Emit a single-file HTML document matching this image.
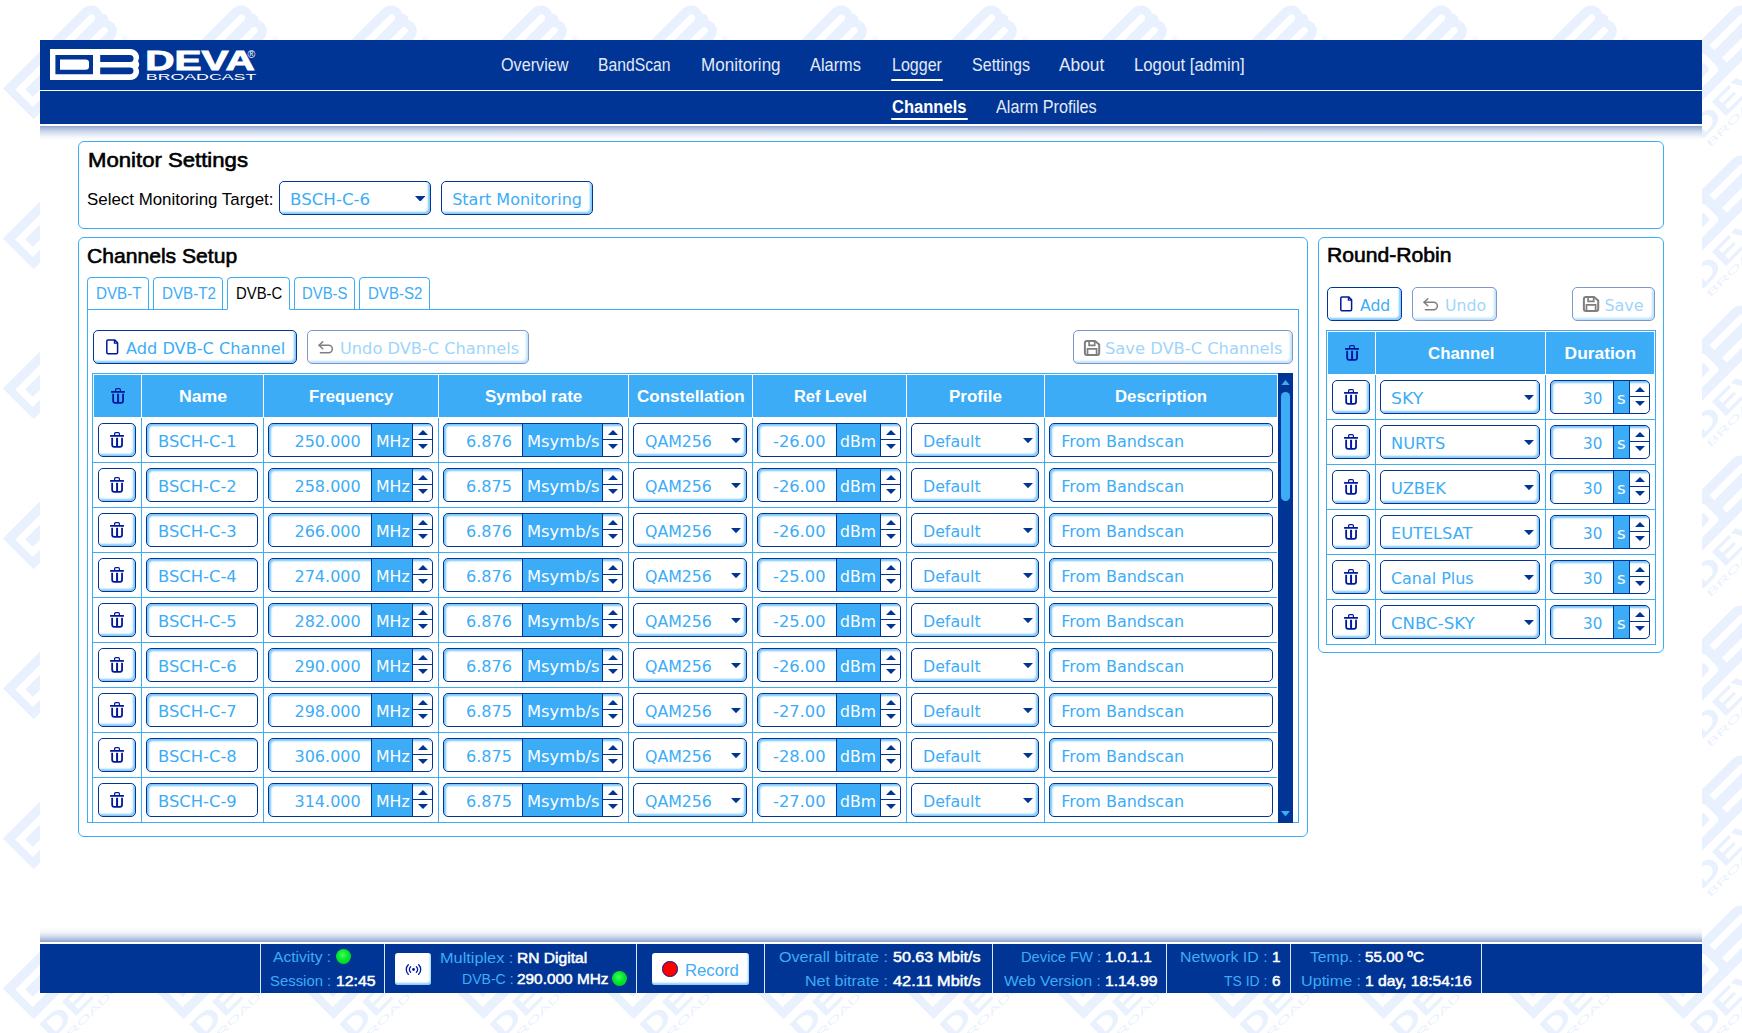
<!DOCTYPE html>
<html lang="en"><head><meta charset="utf-8"><title>DEVA Broadcast - Logger Channels</title>
<style>
html,body{margin:0;padding:0}
body{width:1742px;height:1033px;position:relative;overflow:hidden;background:#fff;font-family:"Liberation Sans",sans-serif}
div,span.t,svg{position:absolute;box-sizing:border-box}
span.t{white-space:pre;line-height:1;transform-origin:0 0;display:block}
.panel{border:1px solid #3dacf7;border-radius:6px;background:#fff}
.inp{border:1px solid #003595;border-radius:5px;background:#fff;box-shadow:inset 2px 2px 2px rgba(61,172,247,.7)}
.btn{border:1px solid #003595;border-radius:5px;background:#fff;box-shadow:inset -2px -2px 2px rgba(61,172,247,.65)}
.dis{opacity:.5}
.th{background:#3dacf7}
.ln{background:#3dacf7}
.unit{background:#3dacf7;border-left:1px solid #003595;border-right:1px solid #003595}
.sep{background:#d9e6fb}

</style></head>
<body>
<svg width="1742" height="1033" style="left:0;top:0">
<defs><g id="wml"><path fill="#e9f1fe" d="M0 0 H112 A12.5 11.5 0 0 1 123 17 Q125 19 125 21.7 Q125 24 123 26.4 A12.5 11.5 0 0 1 112 43.4 H0 Z"/><path fill="#fff" d="M8 9.3 H56 Q61 9.3 61 14 V29.4 Q61 34.1 56 34.1 H8 Z"/><path fill="#e9f1fe" d="M15.2 16.3 H50 Q54 16.3 54 20 V23.4 Q54 27.1 50 27.1 H15.2 Z"/><path fill="#fff" d="M70.5 9.3 H112.5 A3.5 3.5 0 0 1 112.5 16.3 H70.5 Z"/><path fill="#fff" d="M70.5 27.1 H112.5 A3.5 3.5 0 0 1 112.5 34.1 H70.5 Z"/><text x="-2.5" y="71" font-family="Liberation Sans,sans-serif" font-weight="700" font-size="29" textLength="119" lengthAdjust="spacingAndGlyphs" fill="#e9f1fe">DEVA</text><text x="-1" y="82.5" font-family="Liberation Sans,sans-serif" font-size="9.5" textLength="126" lengthAdjust="spacingAndGlyphs" fill="#e9f1fe">BROADCAST</text><text x="117.5" y="55" font-family="Liberation Sans,sans-serif" font-size="9.5" fill="#e9f1fe">®</text></g>
<clipPath id="wmc"><rect x="0" y="0" width="150" height="150"/></clipPath>
<pattern id="wmp" width="150" height="150" patternUnits="userSpaceOnUse"><g clip-path="url(#wmc)"><g transform="matrix(0.7071 -0.7071 0.7071 0.7071 2.97 88.50)"><use href="#wml"/></g></g></pattern></defs>
<rect width="1742" height="1033" fill="url(#wmp)"/></svg>
<div style="left:40px;top:40px;width:1662px;height:953px;background:#fff"></div>
<div style="left:40px;top:40px;width:1662px;height:84px;background:#003595"></div>
<div style="left:40px;top:90px;width:1662px;height:1px;background:#fff"></div>
<div style="left:40px;top:126px;width:1662px;height:14px;background:linear-gradient(to bottom,#8fa6d2 0%,#c9d4ea 35%,#f1f4fa 75%,#fff 100%)"></div>
<svg width="210" height="34" viewBox="0 0 210 34" style="left:49px;top:48px">
<path fill="#fff" d="M1 1 H81 A9 8.3 0 0 1 89 13.2 Q90.2 14.8 90.2 16.5 Q90.2 18.2 89 19.8 A9 8.3 0 0 1 81 32 H1 Z"/>
<path fill="#003595" d="M6.4 6.9 H44 V26.3 H6.4 Z"/>
<path fill="#fff" d="M11 11.4 H36.5 Q40 11.4 40 14.4 V18.8 Q40 21.8 36.5 21.8 H11 Z"/>
<path fill="#003595" d="M51.2 6.9 H81 A3.55 3.55 0 0 1 81 14 H51.2 Z"/>
<path fill="#003595" d="M51.2 19.4 H81 A3.45 3.45 0 0 1 81 26.3 H51.2 Z"/>
<text x="96.3" y="21.5" font-family="Liberation Sans,sans-serif" font-weight="700" font-size="27.6" textLength="109.5" lengthAdjust="spacingAndGlyphs" fill="#fff" stroke="#fff" stroke-width="0.9">DEVA</text>
<text x="96.8" y="31.9" font-family="Liberation Sans,sans-serif" font-size="8.6" textLength="110.5" lengthAdjust="spacingAndGlyphs" fill="#fff">BROADCAST</text>
<text x="198.6" y="9.6" font-family="Liberation Sans,sans-serif" font-size="10.5" fill="#fff">®</text>
</svg>
<span id="t0" class="t" style="left:500.70px;top:57.00px;font:400 17.5px/1 'Liberation Sans',sans-serif;color:#e3eaf6;transform:scaleX(0.9241);">Overview</span>
<span id="t1" class="t" style="left:598.20px;top:57.00px;font:400 17.5px/1 'Liberation Sans',sans-serif;color:#e3eaf6;transform:scaleX(0.8977);">BandScan</span>
<span id="t2" class="t" style="left:700.90px;top:57.00px;font:400 17.5px/1 'Liberation Sans',sans-serif;color:#e3eaf6;transform:scaleX(0.9741);">Monitoring</span>
<span id="t3" class="t" style="left:810.20px;top:57.00px;font:400 17.5px/1 'Liberation Sans',sans-serif;color:#e3eaf6;transform:scaleX(0.9347);">Alarms</span>
<span id="t4" class="t" style="left:891.50px;top:57.00px;font:400 17.5px/1 'Liberation Sans',sans-serif;color:#e3eaf6;transform:scaleX(0.9156);">Logger</span>
<span id="t5" class="t" style="left:971.80px;top:57.00px;font:400 17.5px/1 'Liberation Sans',sans-serif;color:#e3eaf6;transform:scaleX(0.9172);">Settings</span>
<span id="t6" class="t" style="left:1059.30px;top:57.00px;font:400 17.5px/1 'Liberation Sans',sans-serif;color:#e3eaf6;transform:scaleX(0.9883);">About</span>
<span id="t7" class="t" style="left:1134.40px;top:57.00px;font:400 17.5px/1 'Liberation Sans',sans-serif;color:#e3eaf6;transform:scaleX(0.9552);">Logout [admin]</span>
<div style="left:890.7px;top:79px;width:52px;height:2.3px;background:#fff;border-radius:1.2px"></div>
<span id="t8" class="t" style="left:891.50px;top:99.00px;font:700 17.5px/1 'Liberation Sans',sans-serif;color:#fff;transform:scaleX(0.9457);">Channels</span>
<div style="left:890.7px;top:118px;width:77px;height:2.4px;background:#fff;border-radius:1.2px"></div>
<span id="t9" class="t" style="left:996.20px;top:99.00px;font:400 17.5px/1 'Liberation Sans',sans-serif;color:#e3eaf6;transform:scaleX(0.9245);">Alarm Profiles</span>
<div class="panel" style="left:78px;top:141px;width:1586px;height:87.5px;"></div>
<span id="t10" class="t" style="left:87.50px;top:150.00px;font:400 20.6px/1 'Liberation Sans',sans-serif;color:#000;transform:scaleX(1.0752);-webkit-text-stroke:0.6px #000;">Monitor Settings</span>
<span id="t11" class="t" style="left:87.20px;top:191.00px;font:400 17.4px/1 'Liberation Sans',sans-serif;color:#000;transform:scaleX(0.9711);">Select Monitoring Target:</span>
<div class="btn" style="left:279px;top:181px;width:152px;height:34px;"></div>
<span id="t12" class="t" style="left:289.90px;top:192.00px;font:400 16px/1 'DejaVu Sans','Liberation Sans',sans-serif;color:#3dacf7;transform:scaleX(1.0422);">BSCH-C-6</span>
<svg width="10.5" height="5.6" viewBox="0 0 10.5 5.6" style="left:414.5px;top:195.7px"><path d="M0 0 H10.5 L5.25 5.6 Z" fill="#003595"/></svg>
<div class="btn" style="left:441px;top:181px;width:152px;height:34px;"></div>
<span id="t13" class="t" style="left:452.20px;top:192.00px;font:400 16px/1 'DejaVu Sans','Liberation Sans',sans-serif;color:#3dacf7;">Start Monitoring</span>
<div class="panel" style="left:78px;top:237px;width:1230px;height:599.5px;"></div>
<span id="t14" class="t" style="left:87.40px;top:246.00px;font:400 20.6px/1 'Liberation Sans',sans-serif;color:#000;transform:scaleX(1.0248);-webkit-text-stroke:0.6px #000;">Channels Setup</span>
<div style="left:87px;top:309px;width:1212px;height:514px;border:1px solid #3dacf7"></div>
<div style="left:87px;top:277px;width:62px;height:32px;border:1px solid #3dacf7;border-bottom:none;border-radius:4.5px 4.5px 0 0;background:#fff"></div>
<div style="left:153px;top:277px;width:70px;height:32px;border:1px solid #3dacf7;border-bottom:none;border-radius:4.5px 4.5px 0 0;background:#fff"></div>
<div style="left:227px;top:277px;width:63px;height:33px;border:1px solid #3dacf7;border-bottom:1px solid #fff;border-radius:4.5px 4.5px 0 0;background:#fff"></div>
<div style="left:294px;top:277px;width:61px;height:32px;border:1px solid #3dacf7;border-bottom:none;border-radius:4.5px 4.5px 0 0;background:#fff"></div>
<div style="left:359px;top:277px;width:71px;height:32px;border:1px solid #3dacf7;border-bottom:none;border-radius:4.5px 4.5px 0 0;background:#fff"></div>
<span id="t15" class="t" style="left:96.00px;top:285.00px;font:400 17.4px/1 'Liberation Sans',sans-serif;color:#3dacf7;transform:scaleX(0.8738);">DVB-T</span>
<span id="t16" class="t" style="left:161.50px;top:285.00px;font:400 17.4px/1 'Liberation Sans',sans-serif;color:#3dacf7;transform:scaleX(0.8732);">DVB-T2</span>
<span id="t17" class="t" style="left:235.80px;top:285.00px;font:400 17.4px/1 'Liberation Sans',sans-serif;color:#000;transform:scaleX(0.8557);">DVB-C</span>
<span id="t18" class="t" style="left:302.30px;top:285.00px;font:400 17.4px/1 'Liberation Sans',sans-serif;color:#3dacf7;transform:scaleX(0.8541);">DVB-S</span>
<span id="t19" class="t" style="left:367.80px;top:285.00px;font:400 17.4px/1 'Liberation Sans',sans-serif;color:#3dacf7;transform:scaleX(0.8643);">DVB-S2</span>
<div class="btn" style="left:93px;top:330px;width:204px;height:34px;"></div>
<svg width="13" height="16" viewBox="0 0 13 16" style="left:105.5px;top:339.2px"><path d="M2 0.9 H8.6 L11.6 3.9 V13.6 Q11.6 14.8 10.4 14.8 H2 Q0.8 14.8 0.8 13.6 V2.1 Q0.8 0.9 2 0.9 Z" stroke="#00189b" stroke-width="1.5" fill="none" stroke-linejoin="round"/><path d="M8.4 1.2 V4.1 H11.3" stroke="#00189b" stroke-width="1.2" fill="none"/></svg>
<span id="t20" class="t" style="left:126.10px;top:341.00px;font:400 16px/1 'DejaVu Sans','Liberation Sans',sans-serif;color:#3dacf7;transform:scaleX(1.0098);">Add DVB-C Channel</span>
<div class="btn dis" style="left:307px;top:330px;width:221.5px;height:34px;"></div>
<div class="dis" style="left:0;top:0;width:0;height:0">
<svg width="16" height="13" viewBox="0 0 16 13" style="left:318.3px;top:340.7px"><path d="M1.2 4.3 H10.6 A3.75 3.75 0 0 1 10.6 11.8 H2.4" stroke="#000" stroke-width="1.5" fill="none" stroke-linecap="round"/><path d="M4.8 0.8 L1 4.3 L4.8 7.8" stroke="#000" stroke-width="1.5" fill="none" stroke-linecap="round" stroke-linejoin="round"/></svg>
<span id="t21" class="t" style="left:339.50px;top:341.00px;font:400 16px/1 'DejaVu Sans','Liberation Sans',sans-serif;color:#3dacf7;transform:scaleX(1.0124);">Undo DVB-C Channels</span>
</div>
<div class="btn dis" style="left:1073px;top:330px;width:220px;height:34px;"></div>
<div class="dis" style="left:0;top:0;width:0;height:0">
<svg width="18" height="17" viewBox="0 0 18 17" style="left:1083.3px;top:338.8px"><path d="M3.9 1.9 H12 L16.2 5.6 V13.9 Q16.2 15.9 14.2 15.9 H3.9 Q1.9 15.9 1.9 13.9 V3.9 Q1.9 1.9 3.9 1.9 Z" stroke="#000" stroke-width="2" fill="none" stroke-linejoin="round"/><path d="M6.1 2.1 V6.3 H11.7 V2.1 M4.5 15.7 V9.9 H13.6 V15.7" stroke="#000" stroke-width="1.7" fill="none"/></svg>
<span id="t22" class="t" style="left:1105.00px;top:341.00px;font:400 16px/1 'DejaVu Sans','Liberation Sans',sans-serif;color:#3dacf7;transform:scaleX(1.0185);">Save DVB-C Channels</span>
</div>
<div class="ln" style="left:92px;top:373px;width:1px;height:450px;"></div>
<div class="ln" style="left:92px;top:373px;width:1186px;height:1px;"></div>
<div class="th" style="left:94px;top:375px;width:47px;height:42px;"></div>
<div class="th" style="left:142px;top:375px;width:121px;height:42px;"></div>
<div class="th" style="left:264px;top:375px;width:174px;height:42px;"></div>
<div class="th" style="left:439px;top:375px;width:189px;height:42px;"></div>
<div class="th" style="left:629px;top:375px;width:123px;height:42px;"></div>
<div class="th" style="left:753px;top:375px;width:153px;height:42px;"></div>
<div class="th" style="left:907px;top:375px;width:137px;height:42px;"></div>
<div class="th" style="left:1045px;top:375px;width:232px;height:42px;"></div>
<div class="ln" style="left:141px;top:418px;width:1px;height:405px;"></div>
<div class="ln" style="left:263px;top:418px;width:1px;height:405px;"></div>
<div class="ln" style="left:438px;top:418px;width:1px;height:405px;"></div>
<div class="ln" style="left:628px;top:418px;width:1px;height:405px;"></div>
<div class="ln" style="left:752px;top:418px;width:1px;height:405px;"></div>
<div class="ln" style="left:906px;top:418px;width:1px;height:405px;"></div>
<div class="ln" style="left:1044px;top:418px;width:1px;height:405px;"></div>
<div class="ln" style="left:92px;top:462px;width:1185px;height:1px;"></div>
<div class="ln" style="left:92px;top:507px;width:1185px;height:1px;"></div>
<div class="ln" style="left:92px;top:552px;width:1185px;height:1px;"></div>
<div class="ln" style="left:92px;top:597px;width:1185px;height:1px;"></div>
<div class="ln" style="left:92px;top:642px;width:1185px;height:1px;"></div>
<div class="ln" style="left:92px;top:687px;width:1185px;height:1px;"></div>
<div class="ln" style="left:92px;top:732px;width:1185px;height:1px;"></div>
<div class="ln" style="left:92px;top:777px;width:1185px;height:1px;"></div>
<div class="ln" style="left:92px;top:822px;width:1185px;height:1px;"></div>
<svg width="14" height="15.6" viewBox="0 0 14 15.6" style="left:111px;top:388.2px"><rect x="0" y="3" width="14" height="1.75" rx="0.5" fill="#00189b"/><path d="M4.6 3.2 V1.7 Q4.6 0.6 5.7 0.6 H8.3 Q9.4 0.6 9.4 1.7 V3.2" stroke="#00189b" stroke-width="1.2" fill="none"/><path d="M2.15 5.8 V12.7 Q2.15 14.8 4.25 14.8 H9.95 Q12.05 14.8 12.05 12.7 V5.8" stroke="#00189b" stroke-width="1.8" fill="none"/><path d="M7.07 5.8 V14.2" stroke="#00189b" stroke-width="2" fill="none"/></svg>
<span id="t23" class="t" style="left:178.70px;top:388.00px;font:700 17.4px/1 'Liberation Sans',sans-serif;color:#fff;transform:scaleX(1.0174);">Name</span>
<span id="t24" class="t" style="left:309.30px;top:388.00px;font:700 17.4px/1 'Liberation Sans',sans-serif;color:#fff;transform:scaleX(0.9596);">Frequency</span>
<span id="t25" class="t" style="left:485.30px;top:388.00px;font:700 17.4px/1 'Liberation Sans',sans-serif;color:#fff;transform:scaleX(0.9774);">Symbol rate</span>
<span id="t26" class="t" style="left:637.00px;top:388.00px;font:700 17.4px/1 'Liberation Sans',sans-serif;color:#fff;transform:scaleX(0.9777);">Constellation</span>
<span id="t27" class="t" style="left:793.50px;top:388.00px;font:700 17.4px/1 'Liberation Sans',sans-serif;color:#fff;transform:scaleX(0.9414);">Ref Level</span>
<span id="t28" class="t" style="left:949.20px;top:388.00px;font:700 17.4px/1 'Liberation Sans',sans-serif;color:#fff;transform:scaleX(0.9774);">Profile</span>
<span id="t29" class="t" style="left:1115.20px;top:388.00px;font:700 17.4px/1 'Liberation Sans',sans-serif;color:#fff;transform:scaleX(0.9627);">Description</span>
<div class="btn" style="left:98px;top:423px;width:38px;height:34px;"></div>
<svg width="14" height="15.6" viewBox="0 0 14 15.6" style="left:109.9px;top:432.1px"><rect x="0" y="3" width="14" height="1.75" rx="0.5" fill="#00189b"/><path d="M4.6 3.2 V1.7 Q4.6 0.6 5.7 0.6 H8.3 Q9.4 0.6 9.4 1.7 V3.2" stroke="#00189b" stroke-width="1.2" fill="none"/><path d="M2.15 5.8 V12.7 Q2.15 14.8 4.25 14.8 H9.95 Q12.05 14.8 12.05 12.7 V5.8" stroke="#00189b" stroke-width="1.8" fill="none"/><path d="M7.07 5.8 V14.2" stroke="#00189b" stroke-width="2" fill="none"/></svg>
<div class="inp" style="left:146px;top:423px;width:112px;height:34px;"></div>
<span id="t30" class="t" style="left:157.80px;top:434.00px;font:400 16px/1 'DejaVu Sans','Liberation Sans',sans-serif;color:#3dacf7;transform:scaleX(1.0227);">BSCH-C-1</span>
<div class="inp" style="left:268px;top:423px;width:165px;height:34px;"></div>
<div class="unit" style="left:371px;top:424px;width:42px;height:32px;"></div>
<span id="t31" class="t" style="left:294.50px;top:434.00px;font:400 16px/1 'DejaVu Sans','Liberation Sans',sans-serif;color:#3dacf7;">250.000</span>
<span id="t32" class="t" style="left:375.70px;top:434.00px;font:400 16px/1 'DejaVu Sans','Liberation Sans',sans-serif;color:#fff;transform:scaleX(0.9844);">MHz</span>
<div style="left:413px;top:439px;width:19px;height:1px;background:#003595"></div>
<svg width="10" height="5" viewBox="0 0 10 5" style="left:417.8px;top:430.2px"><path d="M0 5 H10 L5.0 0 Z" fill="#003595"/></svg>
<svg width="10" height="5" viewBox="0 0 10 5" style="left:417.8px;top:444.3px"><path d="M0 0 H10 L5.0 5 Z" fill="#003595"/></svg>
<div class="inp" style="left:443px;top:423px;width:180px;height:34px;"></div>
<div class="unit" style="left:522px;top:424px;width:81px;height:32px;"></div>
<span id="t33" class="t" style="left:466.20px;top:434.00px;font:400 16px/1 'DejaVu Sans','Liberation Sans',sans-serif;color:#3dacf7;transform:scaleX(1.0041);">6.876</span>
<span id="t34" class="t" style="left:526.90px;top:434.00px;font:400 16px/1 'DejaVu Sans','Liberation Sans',sans-serif;color:#fff;transform:scaleX(1.0200);">Msymb/s</span>
<div style="left:603px;top:439px;width:19px;height:1px;background:#003595"></div>
<svg width="10" height="5" viewBox="0 0 10 5" style="left:607.8px;top:430.2px"><path d="M0 5 H10 L5.0 0 Z" fill="#003595"/></svg>
<svg width="10" height="5" viewBox="0 0 10 5" style="left:607.8px;top:444.3px"><path d="M0 0 H10 L5.0 5 Z" fill="#003595"/></svg>
<div class="btn" style="left:633px;top:423px;width:114px;height:34px;"></div>
<span id="t35" class="t" style="left:644.50px;top:434.00px;font:400 16px/1 'DejaVu Sans','Liberation Sans',sans-serif;color:#3dacf7;transform:scaleX(0.9854);">QAM256</span>
<svg width="10" height="5.2" viewBox="0 0 10 5.2" style="left:731px;top:438px"><path d="M0 0 H10 L5.0 5.2 Z" fill="#003595"/></svg>
<div class="inp" style="left:757px;top:423px;width:144px;height:34px;"></div>
<div class="unit" style="left:836px;top:424px;width:45px;height:32px;"></div>
<span id="t36" class="t" style="left:773.00px;top:434.00px;font:400 16px/1 'DejaVu Sans','Liberation Sans',sans-serif;color:#3dacf7;transform:scaleX(1.0179);">-26.00</span>
<span id="t37" class="t" style="left:840.40px;top:434.00px;font:400 16px/1 'DejaVu Sans','Liberation Sans',sans-serif;color:#fff;transform:scaleX(0.9777);">dBm</span>
<div style="left:881px;top:439px;width:19px;height:1px;background:#003595"></div>
<svg width="10" height="5" viewBox="0 0 10 5" style="left:885.8px;top:430.2px"><path d="M0 5 H10 L5.0 0 Z" fill="#003595"/></svg>
<svg width="10" height="5" viewBox="0 0 10 5" style="left:885.8px;top:444.3px"><path d="M0 0 H10 L5.0 5 Z" fill="#003595"/></svg>
<div class="btn" style="left:911px;top:423px;width:128px;height:34px;"></div>
<span id="t38" class="t" style="left:922.80px;top:434.00px;font:400 16px/1 'DejaVu Sans','Liberation Sans',sans-serif;color:#3dacf7;transform:scaleX(0.9869);">Default</span>
<svg width="10" height="5.2" viewBox="0 0 10 5.2" style="left:1023px;top:438px"><path d="M0 0 H10 L5.0 5.2 Z" fill="#003595"/></svg>
<div class="inp" style="left:1049px;top:423px;width:224px;height:34px;"></div>
<span id="t39" class="t" style="left:1061.20px;top:434.00px;font:400 16px/1 'DejaVu Sans','Liberation Sans',sans-serif;color:#3dacf7;">From Bandscan</span>
<div class="btn" style="left:98px;top:468px;width:38px;height:34px;"></div>
<svg width="14" height="15.6" viewBox="0 0 14 15.6" style="left:109.9px;top:477.1px"><rect x="0" y="3" width="14" height="1.75" rx="0.5" fill="#00189b"/><path d="M4.6 3.2 V1.7 Q4.6 0.6 5.7 0.6 H8.3 Q9.4 0.6 9.4 1.7 V3.2" stroke="#00189b" stroke-width="1.2" fill="none"/><path d="M2.15 5.8 V12.7 Q2.15 14.8 4.25 14.8 H9.95 Q12.05 14.8 12.05 12.7 V5.8" stroke="#00189b" stroke-width="1.8" fill="none"/><path d="M7.07 5.8 V14.2" stroke="#00189b" stroke-width="2" fill="none"/></svg>
<div class="inp" style="left:146px;top:468px;width:112px;height:34px;"></div>
<span id="t40" class="t" style="left:157.80px;top:479.00px;font:400 16px/1 'DejaVu Sans','Liberation Sans',sans-serif;color:#3dacf7;transform:scaleX(1.0227);">BSCH-C-2</span>
<div class="inp" style="left:268px;top:468px;width:165px;height:34px;"></div>
<div class="unit" style="left:371px;top:469px;width:42px;height:32px;"></div>
<span id="t41" class="t" style="left:294.50px;top:479.00px;font:400 16px/1 'DejaVu Sans','Liberation Sans',sans-serif;color:#3dacf7;">258.000</span>
<span id="t42" class="t" style="left:375.70px;top:479.00px;font:400 16px/1 'DejaVu Sans','Liberation Sans',sans-serif;color:#fff;transform:scaleX(0.9844);">MHz</span>
<div style="left:413px;top:484px;width:19px;height:1px;background:#003595"></div>
<svg width="10" height="5" viewBox="0 0 10 5" style="left:417.8px;top:475.2px"><path d="M0 5 H10 L5.0 0 Z" fill="#003595"/></svg>
<svg width="10" height="5" viewBox="0 0 10 5" style="left:417.8px;top:489.3px"><path d="M0 0 H10 L5.0 5 Z" fill="#003595"/></svg>
<div class="inp" style="left:443px;top:468px;width:180px;height:34px;"></div>
<div class="unit" style="left:522px;top:469px;width:81px;height:32px;"></div>
<span id="t43" class="t" style="left:466.20px;top:479.00px;font:400 16px/1 'DejaVu Sans','Liberation Sans',sans-serif;color:#3dacf7;transform:scaleX(1.0041);">6.875</span>
<span id="t44" class="t" style="left:526.90px;top:479.00px;font:400 16px/1 'DejaVu Sans','Liberation Sans',sans-serif;color:#fff;transform:scaleX(1.0200);">Msymb/s</span>
<div style="left:603px;top:484px;width:19px;height:1px;background:#003595"></div>
<svg width="10" height="5" viewBox="0 0 10 5" style="left:607.8px;top:475.2px"><path d="M0 5 H10 L5.0 0 Z" fill="#003595"/></svg>
<svg width="10" height="5" viewBox="0 0 10 5" style="left:607.8px;top:489.3px"><path d="M0 0 H10 L5.0 5 Z" fill="#003595"/></svg>
<div class="btn" style="left:633px;top:468px;width:114px;height:34px;"></div>
<span id="t45" class="t" style="left:644.50px;top:479.00px;font:400 16px/1 'DejaVu Sans','Liberation Sans',sans-serif;color:#3dacf7;transform:scaleX(0.9854);">QAM256</span>
<svg width="10" height="5.2" viewBox="0 0 10 5.2" style="left:731px;top:483px"><path d="M0 0 H10 L5.0 5.2 Z" fill="#003595"/></svg>
<div class="inp" style="left:757px;top:468px;width:144px;height:34px;"></div>
<div class="unit" style="left:836px;top:469px;width:45px;height:32px;"></div>
<span id="t46" class="t" style="left:773.00px;top:479.00px;font:400 16px/1 'DejaVu Sans','Liberation Sans',sans-serif;color:#3dacf7;transform:scaleX(1.0179);">-26.00</span>
<span id="t47" class="t" style="left:840.40px;top:479.00px;font:400 16px/1 'DejaVu Sans','Liberation Sans',sans-serif;color:#fff;transform:scaleX(0.9777);">dBm</span>
<div style="left:881px;top:484px;width:19px;height:1px;background:#003595"></div>
<svg width="10" height="5" viewBox="0 0 10 5" style="left:885.8px;top:475.2px"><path d="M0 5 H10 L5.0 0 Z" fill="#003595"/></svg>
<svg width="10" height="5" viewBox="0 0 10 5" style="left:885.8px;top:489.3px"><path d="M0 0 H10 L5.0 5 Z" fill="#003595"/></svg>
<div class="btn" style="left:911px;top:468px;width:128px;height:34px;"></div>
<span id="t48" class="t" style="left:922.80px;top:479.00px;font:400 16px/1 'DejaVu Sans','Liberation Sans',sans-serif;color:#3dacf7;transform:scaleX(0.9869);">Default</span>
<svg width="10" height="5.2" viewBox="0 0 10 5.2" style="left:1023px;top:483px"><path d="M0 0 H10 L5.0 5.2 Z" fill="#003595"/></svg>
<div class="inp" style="left:1049px;top:468px;width:224px;height:34px;"></div>
<span id="t49" class="t" style="left:1061.20px;top:479.00px;font:400 16px/1 'DejaVu Sans','Liberation Sans',sans-serif;color:#3dacf7;">From Bandscan</span>
<div class="btn" style="left:98px;top:513px;width:38px;height:34px;"></div>
<svg width="14" height="15.6" viewBox="0 0 14 15.6" style="left:109.9px;top:522.1px"><rect x="0" y="3" width="14" height="1.75" rx="0.5" fill="#00189b"/><path d="M4.6 3.2 V1.7 Q4.6 0.6 5.7 0.6 H8.3 Q9.4 0.6 9.4 1.7 V3.2" stroke="#00189b" stroke-width="1.2" fill="none"/><path d="M2.15 5.8 V12.7 Q2.15 14.8 4.25 14.8 H9.95 Q12.05 14.8 12.05 12.7 V5.8" stroke="#00189b" stroke-width="1.8" fill="none"/><path d="M7.07 5.8 V14.2" stroke="#00189b" stroke-width="2" fill="none"/></svg>
<div class="inp" style="left:146px;top:513px;width:112px;height:34px;"></div>
<span id="t50" class="t" style="left:157.80px;top:524.00px;font:400 16px/1 'DejaVu Sans','Liberation Sans',sans-serif;color:#3dacf7;transform:scaleX(1.0227);">BSCH-C-3</span>
<div class="inp" style="left:268px;top:513px;width:165px;height:34px;"></div>
<div class="unit" style="left:371px;top:514px;width:42px;height:32px;"></div>
<span id="t51" class="t" style="left:294.50px;top:524.00px;font:400 16px/1 'DejaVu Sans','Liberation Sans',sans-serif;color:#3dacf7;">266.000</span>
<span id="t52" class="t" style="left:375.70px;top:524.00px;font:400 16px/1 'DejaVu Sans','Liberation Sans',sans-serif;color:#fff;transform:scaleX(0.9844);">MHz</span>
<div style="left:413px;top:529px;width:19px;height:1px;background:#003595"></div>
<svg width="10" height="5" viewBox="0 0 10 5" style="left:417.8px;top:520.2px"><path d="M0 5 H10 L5.0 0 Z" fill="#003595"/></svg>
<svg width="10" height="5" viewBox="0 0 10 5" style="left:417.8px;top:534.3px"><path d="M0 0 H10 L5.0 5 Z" fill="#003595"/></svg>
<div class="inp" style="left:443px;top:513px;width:180px;height:34px;"></div>
<div class="unit" style="left:522px;top:514px;width:81px;height:32px;"></div>
<span id="t53" class="t" style="left:466.20px;top:524.00px;font:400 16px/1 'DejaVu Sans','Liberation Sans',sans-serif;color:#3dacf7;transform:scaleX(1.0041);">6.876</span>
<span id="t54" class="t" style="left:526.90px;top:524.00px;font:400 16px/1 'DejaVu Sans','Liberation Sans',sans-serif;color:#fff;transform:scaleX(1.0200);">Msymb/s</span>
<div style="left:603px;top:529px;width:19px;height:1px;background:#003595"></div>
<svg width="10" height="5" viewBox="0 0 10 5" style="left:607.8px;top:520.2px"><path d="M0 5 H10 L5.0 0 Z" fill="#003595"/></svg>
<svg width="10" height="5" viewBox="0 0 10 5" style="left:607.8px;top:534.3px"><path d="M0 0 H10 L5.0 5 Z" fill="#003595"/></svg>
<div class="btn" style="left:633px;top:513px;width:114px;height:34px;"></div>
<span id="t55" class="t" style="left:644.50px;top:524.00px;font:400 16px/1 'DejaVu Sans','Liberation Sans',sans-serif;color:#3dacf7;transform:scaleX(0.9854);">QAM256</span>
<svg width="10" height="5.2" viewBox="0 0 10 5.2" style="left:731px;top:528px"><path d="M0 0 H10 L5.0 5.2 Z" fill="#003595"/></svg>
<div class="inp" style="left:757px;top:513px;width:144px;height:34px;"></div>
<div class="unit" style="left:836px;top:514px;width:45px;height:32px;"></div>
<span id="t56" class="t" style="left:773.00px;top:524.00px;font:400 16px/1 'DejaVu Sans','Liberation Sans',sans-serif;color:#3dacf7;transform:scaleX(1.0179);">-26.00</span>
<span id="t57" class="t" style="left:840.40px;top:524.00px;font:400 16px/1 'DejaVu Sans','Liberation Sans',sans-serif;color:#fff;transform:scaleX(0.9777);">dBm</span>
<div style="left:881px;top:529px;width:19px;height:1px;background:#003595"></div>
<svg width="10" height="5" viewBox="0 0 10 5" style="left:885.8px;top:520.2px"><path d="M0 5 H10 L5.0 0 Z" fill="#003595"/></svg>
<svg width="10" height="5" viewBox="0 0 10 5" style="left:885.8px;top:534.3px"><path d="M0 0 H10 L5.0 5 Z" fill="#003595"/></svg>
<div class="btn" style="left:911px;top:513px;width:128px;height:34px;"></div>
<span id="t58" class="t" style="left:922.80px;top:524.00px;font:400 16px/1 'DejaVu Sans','Liberation Sans',sans-serif;color:#3dacf7;transform:scaleX(0.9869);">Default</span>
<svg width="10" height="5.2" viewBox="0 0 10 5.2" style="left:1023px;top:528px"><path d="M0 0 H10 L5.0 5.2 Z" fill="#003595"/></svg>
<div class="inp" style="left:1049px;top:513px;width:224px;height:34px;"></div>
<span id="t59" class="t" style="left:1061.20px;top:524.00px;font:400 16px/1 'DejaVu Sans','Liberation Sans',sans-serif;color:#3dacf7;">From Bandscan</span>
<div class="btn" style="left:98px;top:558px;width:38px;height:34px;"></div>
<svg width="14" height="15.6" viewBox="0 0 14 15.6" style="left:109.9px;top:567.1px"><rect x="0" y="3" width="14" height="1.75" rx="0.5" fill="#00189b"/><path d="M4.6 3.2 V1.7 Q4.6 0.6 5.7 0.6 H8.3 Q9.4 0.6 9.4 1.7 V3.2" stroke="#00189b" stroke-width="1.2" fill="none"/><path d="M2.15 5.8 V12.7 Q2.15 14.8 4.25 14.8 H9.95 Q12.05 14.8 12.05 12.7 V5.8" stroke="#00189b" stroke-width="1.8" fill="none"/><path d="M7.07 5.8 V14.2" stroke="#00189b" stroke-width="2" fill="none"/></svg>
<div class="inp" style="left:146px;top:558px;width:112px;height:34px;"></div>
<span id="t60" class="t" style="left:157.80px;top:569.00px;font:400 16px/1 'DejaVu Sans','Liberation Sans',sans-serif;color:#3dacf7;transform:scaleX(1.0227);">BSCH-C-4</span>
<div class="inp" style="left:268px;top:558px;width:165px;height:34px;"></div>
<div class="unit" style="left:371px;top:559px;width:42px;height:32px;"></div>
<span id="t61" class="t" style="left:294.50px;top:569.00px;font:400 16px/1 'DejaVu Sans','Liberation Sans',sans-serif;color:#3dacf7;">274.000</span>
<span id="t62" class="t" style="left:375.70px;top:569.00px;font:400 16px/1 'DejaVu Sans','Liberation Sans',sans-serif;color:#fff;transform:scaleX(0.9844);">MHz</span>
<div style="left:413px;top:574px;width:19px;height:1px;background:#003595"></div>
<svg width="10" height="5" viewBox="0 0 10 5" style="left:417.8px;top:565.2px"><path d="M0 5 H10 L5.0 0 Z" fill="#003595"/></svg>
<svg width="10" height="5" viewBox="0 0 10 5" style="left:417.8px;top:579.3px"><path d="M0 0 H10 L5.0 5 Z" fill="#003595"/></svg>
<div class="inp" style="left:443px;top:558px;width:180px;height:34px;"></div>
<div class="unit" style="left:522px;top:559px;width:81px;height:32px;"></div>
<span id="t63" class="t" style="left:466.20px;top:569.00px;font:400 16px/1 'DejaVu Sans','Liberation Sans',sans-serif;color:#3dacf7;transform:scaleX(1.0041);">6.876</span>
<span id="t64" class="t" style="left:526.90px;top:569.00px;font:400 16px/1 'DejaVu Sans','Liberation Sans',sans-serif;color:#fff;transform:scaleX(1.0200);">Msymb/s</span>
<div style="left:603px;top:574px;width:19px;height:1px;background:#003595"></div>
<svg width="10" height="5" viewBox="0 0 10 5" style="left:607.8px;top:565.2px"><path d="M0 5 H10 L5.0 0 Z" fill="#003595"/></svg>
<svg width="10" height="5" viewBox="0 0 10 5" style="left:607.8px;top:579.3px"><path d="M0 0 H10 L5.0 5 Z" fill="#003595"/></svg>
<div class="btn" style="left:633px;top:558px;width:114px;height:34px;"></div>
<span id="t65" class="t" style="left:644.50px;top:569.00px;font:400 16px/1 'DejaVu Sans','Liberation Sans',sans-serif;color:#3dacf7;transform:scaleX(0.9854);">QAM256</span>
<svg width="10" height="5.2" viewBox="0 0 10 5.2" style="left:731px;top:573px"><path d="M0 0 H10 L5.0 5.2 Z" fill="#003595"/></svg>
<div class="inp" style="left:757px;top:558px;width:144px;height:34px;"></div>
<div class="unit" style="left:836px;top:559px;width:45px;height:32px;"></div>
<span id="t66" class="t" style="left:773.00px;top:569.00px;font:400 16px/1 'DejaVu Sans','Liberation Sans',sans-serif;color:#3dacf7;transform:scaleX(1.0179);">-25.00</span>
<span id="t67" class="t" style="left:840.40px;top:569.00px;font:400 16px/1 'DejaVu Sans','Liberation Sans',sans-serif;color:#fff;transform:scaleX(0.9777);">dBm</span>
<div style="left:881px;top:574px;width:19px;height:1px;background:#003595"></div>
<svg width="10" height="5" viewBox="0 0 10 5" style="left:885.8px;top:565.2px"><path d="M0 5 H10 L5.0 0 Z" fill="#003595"/></svg>
<svg width="10" height="5" viewBox="0 0 10 5" style="left:885.8px;top:579.3px"><path d="M0 0 H10 L5.0 5 Z" fill="#003595"/></svg>
<div class="btn" style="left:911px;top:558px;width:128px;height:34px;"></div>
<span id="t68" class="t" style="left:922.80px;top:569.00px;font:400 16px/1 'DejaVu Sans','Liberation Sans',sans-serif;color:#3dacf7;transform:scaleX(0.9869);">Default</span>
<svg width="10" height="5.2" viewBox="0 0 10 5.2" style="left:1023px;top:573px"><path d="M0 0 H10 L5.0 5.2 Z" fill="#003595"/></svg>
<div class="inp" style="left:1049px;top:558px;width:224px;height:34px;"></div>
<span id="t69" class="t" style="left:1061.20px;top:569.00px;font:400 16px/1 'DejaVu Sans','Liberation Sans',sans-serif;color:#3dacf7;">From Bandscan</span>
<div class="btn" style="left:98px;top:603px;width:38px;height:34px;"></div>
<svg width="14" height="15.6" viewBox="0 0 14 15.6" style="left:109.9px;top:612.1px"><rect x="0" y="3" width="14" height="1.75" rx="0.5" fill="#00189b"/><path d="M4.6 3.2 V1.7 Q4.6 0.6 5.7 0.6 H8.3 Q9.4 0.6 9.4 1.7 V3.2" stroke="#00189b" stroke-width="1.2" fill="none"/><path d="M2.15 5.8 V12.7 Q2.15 14.8 4.25 14.8 H9.95 Q12.05 14.8 12.05 12.7 V5.8" stroke="#00189b" stroke-width="1.8" fill="none"/><path d="M7.07 5.8 V14.2" stroke="#00189b" stroke-width="2" fill="none"/></svg>
<div class="inp" style="left:146px;top:603px;width:112px;height:34px;"></div>
<span id="t70" class="t" style="left:157.80px;top:614.00px;font:400 16px/1 'DejaVu Sans','Liberation Sans',sans-serif;color:#3dacf7;transform:scaleX(1.0227);">BSCH-C-5</span>
<div class="inp" style="left:268px;top:603px;width:165px;height:34px;"></div>
<div class="unit" style="left:371px;top:604px;width:42px;height:32px;"></div>
<span id="t71" class="t" style="left:294.50px;top:614.00px;font:400 16px/1 'DejaVu Sans','Liberation Sans',sans-serif;color:#3dacf7;">282.000</span>
<span id="t72" class="t" style="left:375.70px;top:614.00px;font:400 16px/1 'DejaVu Sans','Liberation Sans',sans-serif;color:#fff;transform:scaleX(0.9844);">MHz</span>
<div style="left:413px;top:619px;width:19px;height:1px;background:#003595"></div>
<svg width="10" height="5" viewBox="0 0 10 5" style="left:417.8px;top:610.2px"><path d="M0 5 H10 L5.0 0 Z" fill="#003595"/></svg>
<svg width="10" height="5" viewBox="0 0 10 5" style="left:417.8px;top:624.3px"><path d="M0 0 H10 L5.0 5 Z" fill="#003595"/></svg>
<div class="inp" style="left:443px;top:603px;width:180px;height:34px;"></div>
<div class="unit" style="left:522px;top:604px;width:81px;height:32px;"></div>
<span id="t73" class="t" style="left:466.20px;top:614.00px;font:400 16px/1 'DejaVu Sans','Liberation Sans',sans-serif;color:#3dacf7;transform:scaleX(1.0041);">6.876</span>
<span id="t74" class="t" style="left:526.90px;top:614.00px;font:400 16px/1 'DejaVu Sans','Liberation Sans',sans-serif;color:#fff;transform:scaleX(1.0200);">Msymb/s</span>
<div style="left:603px;top:619px;width:19px;height:1px;background:#003595"></div>
<svg width="10" height="5" viewBox="0 0 10 5" style="left:607.8px;top:610.2px"><path d="M0 5 H10 L5.0 0 Z" fill="#003595"/></svg>
<svg width="10" height="5" viewBox="0 0 10 5" style="left:607.8px;top:624.3px"><path d="M0 0 H10 L5.0 5 Z" fill="#003595"/></svg>
<div class="btn" style="left:633px;top:603px;width:114px;height:34px;"></div>
<span id="t75" class="t" style="left:644.50px;top:614.00px;font:400 16px/1 'DejaVu Sans','Liberation Sans',sans-serif;color:#3dacf7;transform:scaleX(0.9854);">QAM256</span>
<svg width="10" height="5.2" viewBox="0 0 10 5.2" style="left:731px;top:618px"><path d="M0 0 H10 L5.0 5.2 Z" fill="#003595"/></svg>
<div class="inp" style="left:757px;top:603px;width:144px;height:34px;"></div>
<div class="unit" style="left:836px;top:604px;width:45px;height:32px;"></div>
<span id="t76" class="t" style="left:773.00px;top:614.00px;font:400 16px/1 'DejaVu Sans','Liberation Sans',sans-serif;color:#3dacf7;transform:scaleX(1.0179);">-25.00</span>
<span id="t77" class="t" style="left:840.40px;top:614.00px;font:400 16px/1 'DejaVu Sans','Liberation Sans',sans-serif;color:#fff;transform:scaleX(0.9777);">dBm</span>
<div style="left:881px;top:619px;width:19px;height:1px;background:#003595"></div>
<svg width="10" height="5" viewBox="0 0 10 5" style="left:885.8px;top:610.2px"><path d="M0 5 H10 L5.0 0 Z" fill="#003595"/></svg>
<svg width="10" height="5" viewBox="0 0 10 5" style="left:885.8px;top:624.3px"><path d="M0 0 H10 L5.0 5 Z" fill="#003595"/></svg>
<div class="btn" style="left:911px;top:603px;width:128px;height:34px;"></div>
<span id="t78" class="t" style="left:922.80px;top:614.00px;font:400 16px/1 'DejaVu Sans','Liberation Sans',sans-serif;color:#3dacf7;transform:scaleX(0.9869);">Default</span>
<svg width="10" height="5.2" viewBox="0 0 10 5.2" style="left:1023px;top:618px"><path d="M0 0 H10 L5.0 5.2 Z" fill="#003595"/></svg>
<div class="inp" style="left:1049px;top:603px;width:224px;height:34px;"></div>
<span id="t79" class="t" style="left:1061.20px;top:614.00px;font:400 16px/1 'DejaVu Sans','Liberation Sans',sans-serif;color:#3dacf7;">From Bandscan</span>
<div class="btn" style="left:98px;top:648px;width:38px;height:34px;"></div>
<svg width="14" height="15.6" viewBox="0 0 14 15.6" style="left:109.9px;top:657.1px"><rect x="0" y="3" width="14" height="1.75" rx="0.5" fill="#00189b"/><path d="M4.6 3.2 V1.7 Q4.6 0.6 5.7 0.6 H8.3 Q9.4 0.6 9.4 1.7 V3.2" stroke="#00189b" stroke-width="1.2" fill="none"/><path d="M2.15 5.8 V12.7 Q2.15 14.8 4.25 14.8 H9.95 Q12.05 14.8 12.05 12.7 V5.8" stroke="#00189b" stroke-width="1.8" fill="none"/><path d="M7.07 5.8 V14.2" stroke="#00189b" stroke-width="2" fill="none"/></svg>
<div class="inp" style="left:146px;top:648px;width:112px;height:34px;"></div>
<span id="t80" class="t" style="left:157.80px;top:659.00px;font:400 16px/1 'DejaVu Sans','Liberation Sans',sans-serif;color:#3dacf7;transform:scaleX(1.0227);">BSCH-C-6</span>
<div class="inp" style="left:268px;top:648px;width:165px;height:34px;"></div>
<div class="unit" style="left:371px;top:649px;width:42px;height:32px;"></div>
<span id="t81" class="t" style="left:294.50px;top:659.00px;font:400 16px/1 'DejaVu Sans','Liberation Sans',sans-serif;color:#3dacf7;">290.000</span>
<span id="t82" class="t" style="left:375.70px;top:659.00px;font:400 16px/1 'DejaVu Sans','Liberation Sans',sans-serif;color:#fff;transform:scaleX(0.9844);">MHz</span>
<div style="left:413px;top:664px;width:19px;height:1px;background:#003595"></div>
<svg width="10" height="5" viewBox="0 0 10 5" style="left:417.8px;top:655.2px"><path d="M0 5 H10 L5.0 0 Z" fill="#003595"/></svg>
<svg width="10" height="5" viewBox="0 0 10 5" style="left:417.8px;top:669.3px"><path d="M0 0 H10 L5.0 5 Z" fill="#003595"/></svg>
<div class="inp" style="left:443px;top:648px;width:180px;height:34px;"></div>
<div class="unit" style="left:522px;top:649px;width:81px;height:32px;"></div>
<span id="t83" class="t" style="left:466.20px;top:659.00px;font:400 16px/1 'DejaVu Sans','Liberation Sans',sans-serif;color:#3dacf7;transform:scaleX(1.0041);">6.876</span>
<span id="t84" class="t" style="left:526.90px;top:659.00px;font:400 16px/1 'DejaVu Sans','Liberation Sans',sans-serif;color:#fff;transform:scaleX(1.0200);">Msymb/s</span>
<div style="left:603px;top:664px;width:19px;height:1px;background:#003595"></div>
<svg width="10" height="5" viewBox="0 0 10 5" style="left:607.8px;top:655.2px"><path d="M0 5 H10 L5.0 0 Z" fill="#003595"/></svg>
<svg width="10" height="5" viewBox="0 0 10 5" style="left:607.8px;top:669.3px"><path d="M0 0 H10 L5.0 5 Z" fill="#003595"/></svg>
<div class="btn" style="left:633px;top:648px;width:114px;height:34px;"></div>
<span id="t85" class="t" style="left:644.50px;top:659.00px;font:400 16px/1 'DejaVu Sans','Liberation Sans',sans-serif;color:#3dacf7;transform:scaleX(0.9854);">QAM256</span>
<svg width="10" height="5.2" viewBox="0 0 10 5.2" style="left:731px;top:663px"><path d="M0 0 H10 L5.0 5.2 Z" fill="#003595"/></svg>
<div class="inp" style="left:757px;top:648px;width:144px;height:34px;"></div>
<div class="unit" style="left:836px;top:649px;width:45px;height:32px;"></div>
<span id="t86" class="t" style="left:773.00px;top:659.00px;font:400 16px/1 'DejaVu Sans','Liberation Sans',sans-serif;color:#3dacf7;transform:scaleX(1.0179);">-26.00</span>
<span id="t87" class="t" style="left:840.40px;top:659.00px;font:400 16px/1 'DejaVu Sans','Liberation Sans',sans-serif;color:#fff;transform:scaleX(0.9777);">dBm</span>
<div style="left:881px;top:664px;width:19px;height:1px;background:#003595"></div>
<svg width="10" height="5" viewBox="0 0 10 5" style="left:885.8px;top:655.2px"><path d="M0 5 H10 L5.0 0 Z" fill="#003595"/></svg>
<svg width="10" height="5" viewBox="0 0 10 5" style="left:885.8px;top:669.3px"><path d="M0 0 H10 L5.0 5 Z" fill="#003595"/></svg>
<div class="btn" style="left:911px;top:648px;width:128px;height:34px;"></div>
<span id="t88" class="t" style="left:922.80px;top:659.00px;font:400 16px/1 'DejaVu Sans','Liberation Sans',sans-serif;color:#3dacf7;transform:scaleX(0.9869);">Default</span>
<svg width="10" height="5.2" viewBox="0 0 10 5.2" style="left:1023px;top:663px"><path d="M0 0 H10 L5.0 5.2 Z" fill="#003595"/></svg>
<div class="inp" style="left:1049px;top:648px;width:224px;height:34px;"></div>
<span id="t89" class="t" style="left:1061.20px;top:659.00px;font:400 16px/1 'DejaVu Sans','Liberation Sans',sans-serif;color:#3dacf7;">From Bandscan</span>
<div class="btn" style="left:98px;top:693px;width:38px;height:34px;"></div>
<svg width="14" height="15.6" viewBox="0 0 14 15.6" style="left:109.9px;top:702.1px"><rect x="0" y="3" width="14" height="1.75" rx="0.5" fill="#00189b"/><path d="M4.6 3.2 V1.7 Q4.6 0.6 5.7 0.6 H8.3 Q9.4 0.6 9.4 1.7 V3.2" stroke="#00189b" stroke-width="1.2" fill="none"/><path d="M2.15 5.8 V12.7 Q2.15 14.8 4.25 14.8 H9.95 Q12.05 14.8 12.05 12.7 V5.8" stroke="#00189b" stroke-width="1.8" fill="none"/><path d="M7.07 5.8 V14.2" stroke="#00189b" stroke-width="2" fill="none"/></svg>
<div class="inp" style="left:146px;top:693px;width:112px;height:34px;"></div>
<span id="t90" class="t" style="left:157.80px;top:704.00px;font:400 16px/1 'DejaVu Sans','Liberation Sans',sans-serif;color:#3dacf7;transform:scaleX(1.0227);">BSCH-C-7</span>
<div class="inp" style="left:268px;top:693px;width:165px;height:34px;"></div>
<div class="unit" style="left:371px;top:694px;width:42px;height:32px;"></div>
<span id="t91" class="t" style="left:294.50px;top:704.00px;font:400 16px/1 'DejaVu Sans','Liberation Sans',sans-serif;color:#3dacf7;">298.000</span>
<span id="t92" class="t" style="left:375.70px;top:704.00px;font:400 16px/1 'DejaVu Sans','Liberation Sans',sans-serif;color:#fff;transform:scaleX(0.9844);">MHz</span>
<div style="left:413px;top:709px;width:19px;height:1px;background:#003595"></div>
<svg width="10" height="5" viewBox="0 0 10 5" style="left:417.8px;top:700.2px"><path d="M0 5 H10 L5.0 0 Z" fill="#003595"/></svg>
<svg width="10" height="5" viewBox="0 0 10 5" style="left:417.8px;top:714.3px"><path d="M0 0 H10 L5.0 5 Z" fill="#003595"/></svg>
<div class="inp" style="left:443px;top:693px;width:180px;height:34px;"></div>
<div class="unit" style="left:522px;top:694px;width:81px;height:32px;"></div>
<span id="t93" class="t" style="left:466.20px;top:704.00px;font:400 16px/1 'DejaVu Sans','Liberation Sans',sans-serif;color:#3dacf7;transform:scaleX(1.0041);">6.875</span>
<span id="t94" class="t" style="left:526.90px;top:704.00px;font:400 16px/1 'DejaVu Sans','Liberation Sans',sans-serif;color:#fff;transform:scaleX(1.0200);">Msymb/s</span>
<div style="left:603px;top:709px;width:19px;height:1px;background:#003595"></div>
<svg width="10" height="5" viewBox="0 0 10 5" style="left:607.8px;top:700.2px"><path d="M0 5 H10 L5.0 0 Z" fill="#003595"/></svg>
<svg width="10" height="5" viewBox="0 0 10 5" style="left:607.8px;top:714.3px"><path d="M0 0 H10 L5.0 5 Z" fill="#003595"/></svg>
<div class="btn" style="left:633px;top:693px;width:114px;height:34px;"></div>
<span id="t95" class="t" style="left:644.50px;top:704.00px;font:400 16px/1 'DejaVu Sans','Liberation Sans',sans-serif;color:#3dacf7;transform:scaleX(0.9854);">QAM256</span>
<svg width="10" height="5.2" viewBox="0 0 10 5.2" style="left:731px;top:708px"><path d="M0 0 H10 L5.0 5.2 Z" fill="#003595"/></svg>
<div class="inp" style="left:757px;top:693px;width:144px;height:34px;"></div>
<div class="unit" style="left:836px;top:694px;width:45px;height:32px;"></div>
<span id="t96" class="t" style="left:773.00px;top:704.00px;font:400 16px/1 'DejaVu Sans','Liberation Sans',sans-serif;color:#3dacf7;transform:scaleX(1.0179);">-27.00</span>
<span id="t97" class="t" style="left:840.40px;top:704.00px;font:400 16px/1 'DejaVu Sans','Liberation Sans',sans-serif;color:#fff;transform:scaleX(0.9777);">dBm</span>
<div style="left:881px;top:709px;width:19px;height:1px;background:#003595"></div>
<svg width="10" height="5" viewBox="0 0 10 5" style="left:885.8px;top:700.2px"><path d="M0 5 H10 L5.0 0 Z" fill="#003595"/></svg>
<svg width="10" height="5" viewBox="0 0 10 5" style="left:885.8px;top:714.3px"><path d="M0 0 H10 L5.0 5 Z" fill="#003595"/></svg>
<div class="btn" style="left:911px;top:693px;width:128px;height:34px;"></div>
<span id="t98" class="t" style="left:922.80px;top:704.00px;font:400 16px/1 'DejaVu Sans','Liberation Sans',sans-serif;color:#3dacf7;transform:scaleX(0.9869);">Default</span>
<svg width="10" height="5.2" viewBox="0 0 10 5.2" style="left:1023px;top:708px"><path d="M0 0 H10 L5.0 5.2 Z" fill="#003595"/></svg>
<div class="inp" style="left:1049px;top:693px;width:224px;height:34px;"></div>
<span id="t99" class="t" style="left:1061.20px;top:704.00px;font:400 16px/1 'DejaVu Sans','Liberation Sans',sans-serif;color:#3dacf7;">From Bandscan</span>
<div class="btn" style="left:98px;top:738px;width:38px;height:34px;"></div>
<svg width="14" height="15.6" viewBox="0 0 14 15.6" style="left:109.9px;top:747.1px"><rect x="0" y="3" width="14" height="1.75" rx="0.5" fill="#00189b"/><path d="M4.6 3.2 V1.7 Q4.6 0.6 5.7 0.6 H8.3 Q9.4 0.6 9.4 1.7 V3.2" stroke="#00189b" stroke-width="1.2" fill="none"/><path d="M2.15 5.8 V12.7 Q2.15 14.8 4.25 14.8 H9.95 Q12.05 14.8 12.05 12.7 V5.8" stroke="#00189b" stroke-width="1.8" fill="none"/><path d="M7.07 5.8 V14.2" stroke="#00189b" stroke-width="2" fill="none"/></svg>
<div class="inp" style="left:146px;top:738px;width:112px;height:34px;"></div>
<span id="t100" class="t" style="left:157.80px;top:749.00px;font:400 16px/1 'DejaVu Sans','Liberation Sans',sans-serif;color:#3dacf7;transform:scaleX(1.0227);">BSCH-C-8</span>
<div class="inp" style="left:268px;top:738px;width:165px;height:34px;"></div>
<div class="unit" style="left:371px;top:739px;width:42px;height:32px;"></div>
<span id="t101" class="t" style="left:294.50px;top:749.00px;font:400 16px/1 'DejaVu Sans','Liberation Sans',sans-serif;color:#3dacf7;">306.000</span>
<span id="t102" class="t" style="left:375.70px;top:749.00px;font:400 16px/1 'DejaVu Sans','Liberation Sans',sans-serif;color:#fff;transform:scaleX(0.9844);">MHz</span>
<div style="left:413px;top:754px;width:19px;height:1px;background:#003595"></div>
<svg width="10" height="5" viewBox="0 0 10 5" style="left:417.8px;top:745.2px"><path d="M0 5 H10 L5.0 0 Z" fill="#003595"/></svg>
<svg width="10" height="5" viewBox="0 0 10 5" style="left:417.8px;top:759.3px"><path d="M0 0 H10 L5.0 5 Z" fill="#003595"/></svg>
<div class="inp" style="left:443px;top:738px;width:180px;height:34px;"></div>
<div class="unit" style="left:522px;top:739px;width:81px;height:32px;"></div>
<span id="t103" class="t" style="left:466.20px;top:749.00px;font:400 16px/1 'DejaVu Sans','Liberation Sans',sans-serif;color:#3dacf7;transform:scaleX(1.0041);">6.875</span>
<span id="t104" class="t" style="left:526.90px;top:749.00px;font:400 16px/1 'DejaVu Sans','Liberation Sans',sans-serif;color:#fff;transform:scaleX(1.0200);">Msymb/s</span>
<div style="left:603px;top:754px;width:19px;height:1px;background:#003595"></div>
<svg width="10" height="5" viewBox="0 0 10 5" style="left:607.8px;top:745.2px"><path d="M0 5 H10 L5.0 0 Z" fill="#003595"/></svg>
<svg width="10" height="5" viewBox="0 0 10 5" style="left:607.8px;top:759.3px"><path d="M0 0 H10 L5.0 5 Z" fill="#003595"/></svg>
<div class="btn" style="left:633px;top:738px;width:114px;height:34px;"></div>
<span id="t105" class="t" style="left:644.50px;top:749.00px;font:400 16px/1 'DejaVu Sans','Liberation Sans',sans-serif;color:#3dacf7;transform:scaleX(0.9854);">QAM256</span>
<svg width="10" height="5.2" viewBox="0 0 10 5.2" style="left:731px;top:753px"><path d="M0 0 H10 L5.0 5.2 Z" fill="#003595"/></svg>
<div class="inp" style="left:757px;top:738px;width:144px;height:34px;"></div>
<div class="unit" style="left:836px;top:739px;width:45px;height:32px;"></div>
<span id="t106" class="t" style="left:773.00px;top:749.00px;font:400 16px/1 'DejaVu Sans','Liberation Sans',sans-serif;color:#3dacf7;transform:scaleX(1.0179);">-28.00</span>
<span id="t107" class="t" style="left:840.40px;top:749.00px;font:400 16px/1 'DejaVu Sans','Liberation Sans',sans-serif;color:#fff;transform:scaleX(0.9777);">dBm</span>
<div style="left:881px;top:754px;width:19px;height:1px;background:#003595"></div>
<svg width="10" height="5" viewBox="0 0 10 5" style="left:885.8px;top:745.2px"><path d="M0 5 H10 L5.0 0 Z" fill="#003595"/></svg>
<svg width="10" height="5" viewBox="0 0 10 5" style="left:885.8px;top:759.3px"><path d="M0 0 H10 L5.0 5 Z" fill="#003595"/></svg>
<div class="btn" style="left:911px;top:738px;width:128px;height:34px;"></div>
<span id="t108" class="t" style="left:922.80px;top:749.00px;font:400 16px/1 'DejaVu Sans','Liberation Sans',sans-serif;color:#3dacf7;transform:scaleX(0.9869);">Default</span>
<svg width="10" height="5.2" viewBox="0 0 10 5.2" style="left:1023px;top:753px"><path d="M0 0 H10 L5.0 5.2 Z" fill="#003595"/></svg>
<div class="inp" style="left:1049px;top:738px;width:224px;height:34px;"></div>
<span id="t109" class="t" style="left:1061.20px;top:749.00px;font:400 16px/1 'DejaVu Sans','Liberation Sans',sans-serif;color:#3dacf7;">From Bandscan</span>
<div class="btn" style="left:98px;top:783px;width:38px;height:34px;"></div>
<svg width="14" height="15.6" viewBox="0 0 14 15.6" style="left:109.9px;top:792.1px"><rect x="0" y="3" width="14" height="1.75" rx="0.5" fill="#00189b"/><path d="M4.6 3.2 V1.7 Q4.6 0.6 5.7 0.6 H8.3 Q9.4 0.6 9.4 1.7 V3.2" stroke="#00189b" stroke-width="1.2" fill="none"/><path d="M2.15 5.8 V12.7 Q2.15 14.8 4.25 14.8 H9.95 Q12.05 14.8 12.05 12.7 V5.8" stroke="#00189b" stroke-width="1.8" fill="none"/><path d="M7.07 5.8 V14.2" stroke="#00189b" stroke-width="2" fill="none"/></svg>
<div class="inp" style="left:146px;top:783px;width:112px;height:34px;"></div>
<span id="t110" class="t" style="left:157.80px;top:794.00px;font:400 16px/1 'DejaVu Sans','Liberation Sans',sans-serif;color:#3dacf7;transform:scaleX(1.0227);">BSCH-C-9</span>
<div class="inp" style="left:268px;top:783px;width:165px;height:34px;"></div>
<div class="unit" style="left:371px;top:784px;width:42px;height:32px;"></div>
<span id="t111" class="t" style="left:294.50px;top:794.00px;font:400 16px/1 'DejaVu Sans','Liberation Sans',sans-serif;color:#3dacf7;">314.000</span>
<span id="t112" class="t" style="left:375.70px;top:794.00px;font:400 16px/1 'DejaVu Sans','Liberation Sans',sans-serif;color:#fff;transform:scaleX(0.9844);">MHz</span>
<div style="left:413px;top:799px;width:19px;height:1px;background:#003595"></div>
<svg width="10" height="5" viewBox="0 0 10 5" style="left:417.8px;top:790.2px"><path d="M0 5 H10 L5.0 0 Z" fill="#003595"/></svg>
<svg width="10" height="5" viewBox="0 0 10 5" style="left:417.8px;top:804.3px"><path d="M0 0 H10 L5.0 5 Z" fill="#003595"/></svg>
<div class="inp" style="left:443px;top:783px;width:180px;height:34px;"></div>
<div class="unit" style="left:522px;top:784px;width:81px;height:32px;"></div>
<span id="t113" class="t" style="left:466.20px;top:794.00px;font:400 16px/1 'DejaVu Sans','Liberation Sans',sans-serif;color:#3dacf7;transform:scaleX(1.0041);">6.875</span>
<span id="t114" class="t" style="left:526.90px;top:794.00px;font:400 16px/1 'DejaVu Sans','Liberation Sans',sans-serif;color:#fff;transform:scaleX(1.0200);">Msymb/s</span>
<div style="left:603px;top:799px;width:19px;height:1px;background:#003595"></div>
<svg width="10" height="5" viewBox="0 0 10 5" style="left:607.8px;top:790.2px"><path d="M0 5 H10 L5.0 0 Z" fill="#003595"/></svg>
<svg width="10" height="5" viewBox="0 0 10 5" style="left:607.8px;top:804.3px"><path d="M0 0 H10 L5.0 5 Z" fill="#003595"/></svg>
<div class="btn" style="left:633px;top:783px;width:114px;height:34px;"></div>
<span id="t115" class="t" style="left:644.50px;top:794.00px;font:400 16px/1 'DejaVu Sans','Liberation Sans',sans-serif;color:#3dacf7;transform:scaleX(0.9854);">QAM256</span>
<svg width="10" height="5.2" viewBox="0 0 10 5.2" style="left:731px;top:798px"><path d="M0 0 H10 L5.0 5.2 Z" fill="#003595"/></svg>
<div class="inp" style="left:757px;top:783px;width:144px;height:34px;"></div>
<div class="unit" style="left:836px;top:784px;width:45px;height:32px;"></div>
<span id="t116" class="t" style="left:773.00px;top:794.00px;font:400 16px/1 'DejaVu Sans','Liberation Sans',sans-serif;color:#3dacf7;transform:scaleX(1.0179);">-27.00</span>
<span id="t117" class="t" style="left:840.40px;top:794.00px;font:400 16px/1 'DejaVu Sans','Liberation Sans',sans-serif;color:#fff;transform:scaleX(0.9777);">dBm</span>
<div style="left:881px;top:799px;width:19px;height:1px;background:#003595"></div>
<svg width="10" height="5" viewBox="0 0 10 5" style="left:885.8px;top:790.2px"><path d="M0 5 H10 L5.0 0 Z" fill="#003595"/></svg>
<svg width="10" height="5" viewBox="0 0 10 5" style="left:885.8px;top:804.3px"><path d="M0 0 H10 L5.0 5 Z" fill="#003595"/></svg>
<div class="btn" style="left:911px;top:783px;width:128px;height:34px;"></div>
<span id="t118" class="t" style="left:922.80px;top:794.00px;font:400 16px/1 'DejaVu Sans','Liberation Sans',sans-serif;color:#3dacf7;transform:scaleX(0.9869);">Default</span>
<svg width="10" height="5.2" viewBox="0 0 10 5.2" style="left:1023px;top:798px"><path d="M0 0 H10 L5.0 5.2 Z" fill="#003595"/></svg>
<div class="inp" style="left:1049px;top:783px;width:224px;height:34px;"></div>
<span id="t119" class="t" style="left:1061.20px;top:794.00px;font:400 16px/1 'DejaVu Sans','Liberation Sans',sans-serif;color:#3dacf7;">From Bandscan</span>
<div style="left:1278px;top:373px;width:15.3px;height:450px;background:#003595"></div>
<div style="left:1281px;top:391.7px;width:9px;height:109.5px;background:#3dacf7;border-radius:4.5px"></div>
<svg width="9" height="5.4" viewBox="0 0 9 5.4" style="left:1281px;top:379.6px"><path d="M0 5.4 H9 L4.5 0 Z" fill="#3dacf7"/></svg>
<svg width="9" height="5.4" viewBox="0 0 9 5.4" style="left:1281px;top:811px"><path d="M0 0 H9 L4.5 5.4 Z" fill="#3dacf7"/></svg>
<div class="panel" style="left:1318px;top:237px;width:346px;height:415.5px;"></div>
<span id="t120" class="t" style="left:1327.40px;top:245.00px;font:400 20.6px/1 'Liberation Sans',sans-serif;color:#000;transform:scaleX(1.0259);-webkit-text-stroke:0.6px #000;">Round-Robin</span>
<div class="btn" style="left:1327px;top:287px;width:75px;height:34px;"></div>
<svg width="13" height="16" viewBox="0 0 13 16" style="left:1339.5px;top:296px"><path d="M2 0.9 H8.6 L11.6 3.9 V13.6 Q11.6 14.8 10.4 14.8 H2 Q0.8 14.8 0.8 13.6 V2.1 Q0.8 0.9 2 0.9 Z" stroke="#00189b" stroke-width="1.5" fill="none" stroke-linejoin="round"/><path d="M8.4 1.2 V4.1 H11.3" stroke="#00189b" stroke-width="1.2" fill="none"/></svg>
<span id="t121" class="t" style="left:1360.00px;top:298.00px;font:400 16px/1 'DejaVu Sans','Liberation Sans',sans-serif;color:#3dacf7;transform:scaleX(0.9779);">Add</span>
<div class="btn dis" style="left:1412px;top:287px;width:85px;height:34px;"></div>
<div class="dis" style="left:0;top:0;width:0;height:0">
<svg width="16" height="13" viewBox="0 0 16 13" style="left:1423px;top:297.7px"><path d="M1.2 4.3 H10.6 A3.75 3.75 0 0 1 10.6 11.8 H2.4" stroke="#000" stroke-width="1.5" fill="none" stroke-linecap="round"/><path d="M4.8 0.8 L1 4.3 L4.8 7.8" stroke="#000" stroke-width="1.5" fill="none" stroke-linecap="round" stroke-linejoin="round"/></svg>
<span id="t122" class="t" style="left:1444.60px;top:298.00px;font:400 16px/1 'DejaVu Sans','Liberation Sans',sans-serif;color:#3dacf7;transform:scaleX(0.9809);">Undo</span>
</div>
<div class="btn dis" style="left:1572px;top:287px;width:83px;height:34px;"></div>
<div class="dis" style="left:0;top:0;width:0;height:0">
<svg width="18" height="17" viewBox="0 0 18 17" style="left:1582.4px;top:295.2px"><path d="M3.9 1.9 H12 L16.2 5.6 V13.9 Q16.2 15.9 14.2 15.9 H3.9 Q1.9 15.9 1.9 13.9 V3.9 Q1.9 1.9 3.9 1.9 Z" stroke="#000" stroke-width="2" fill="none" stroke-linejoin="round"/><path d="M6.1 2.1 V6.3 H11.7 V2.1 M4.5 15.7 V9.9 H13.6 V15.7" stroke="#000" stroke-width="1.7" fill="none"/></svg>
<span id="t123" class="t" style="left:1604.40px;top:298.00px;font:400 16px/1 'DejaVu Sans','Liberation Sans',sans-serif;color:#3dacf7;">Save</span>
</div>
<div class="ln" style="left:1326px;top:330px;width:1px;height:315px;"></div>
<div class="ln" style="left:1326px;top:330px;width:330px;height:1px;"></div>
<div class="th" style="left:1328px;top:332px;width:47px;height:42px;"></div>
<div class="th" style="left:1376px;top:332px;width:169px;height:42px;"></div>
<div class="th" style="left:1546px;top:332px;width:108px;height:42px;"></div>
<div class="ln" style="left:1375px;top:375px;width:1px;height:270px;"></div>
<div class="ln" style="left:1545px;top:375px;width:1px;height:270px;"></div>
<div class="ln" style="left:1655px;top:330px;width:1px;height:315px;"></div>
<div class="ln" style="left:1326px;top:419px;width:330px;height:1px;"></div>
<div class="ln" style="left:1326px;top:464px;width:330px;height:1px;"></div>
<div class="ln" style="left:1326px;top:509px;width:330px;height:1px;"></div>
<div class="ln" style="left:1326px;top:554px;width:330px;height:1px;"></div>
<div class="ln" style="left:1326px;top:599px;width:330px;height:1px;"></div>
<div class="ln" style="left:1326px;top:644px;width:330px;height:1px;"></div>
<svg width="14" height="15.6" viewBox="0 0 14 15.6" style="left:1345.1px;top:345.4px"><rect x="0" y="3" width="14" height="1.75" rx="0.5" fill="#00189b"/><path d="M4.6 3.2 V1.7 Q4.6 0.6 5.7 0.6 H8.3 Q9.4 0.6 9.4 1.7 V3.2" stroke="#00189b" stroke-width="1.2" fill="none"/><path d="M2.15 5.8 V12.7 Q2.15 14.8 4.25 14.8 H9.95 Q12.05 14.8 12.05 12.7 V5.8" stroke="#00189b" stroke-width="1.8" fill="none"/><path d="M7.07 5.8 V14.2" stroke="#00189b" stroke-width="2" fill="none"/></svg>
<span id="t124" class="t" style="left:1427.60px;top:345.00px;font:700 17.4px/1 'Liberation Sans',sans-serif;color:#fff;transform:scaleX(0.9678);">Channel</span>
<span id="t125" class="t" style="left:1564.60px;top:345.00px;font:700 17.4px/1 'Liberation Sans',sans-serif;color:#fff;">Duration</span>
<div class="btn" style="left:1332px;top:380px;width:38px;height:34px;"></div>
<svg width="14" height="15.6" viewBox="0 0 14 15.6" style="left:1343.9px;top:389.1px"><rect x="0" y="3" width="14" height="1.75" rx="0.5" fill="#00189b"/><path d="M4.6 3.2 V1.7 Q4.6 0.6 5.7 0.6 H8.3 Q9.4 0.6 9.4 1.7 V3.2" stroke="#00189b" stroke-width="1.2" fill="none"/><path d="M2.15 5.8 V12.7 Q2.15 14.8 4.25 14.8 H9.95 Q12.05 14.8 12.05 12.7 V5.8" stroke="#00189b" stroke-width="1.8" fill="none"/><path d="M7.07 5.8 V14.2" stroke="#00189b" stroke-width="2" fill="none"/></svg>
<div class="btn" style="left:1380px;top:380px;width:160px;height:34px;"></div>
<span id="t126" class="t" style="left:1391.30px;top:391.00px;font:400 16px/1 'DejaVu Sans','Liberation Sans',sans-serif;color:#3dacf7;transform:scaleX(1.0784);">SKY</span>
<svg width="10" height="5.2" viewBox="0 0 10 5.2" style="left:1524.2px;top:395px"><path d="M0 0 H10 L5.0 5.2 Z" fill="#003595"/></svg>
<div class="inp" style="left:1550px;top:380px;width:100px;height:34px;"></div>
<div class="unit" style="left:1613px;top:381px;width:17px;height:32px;"></div>
<span id="t127" class="t" style="left:1583.40px;top:391.00px;font:400 16px/1 'DejaVu Sans','Liberation Sans',sans-serif;color:#3dacf7;transform:scaleX(0.9480);">30</span>
<span id="t128" class="t" style="left:1617.30px;top:391.00px;font:400 16px/1 'DejaVu Sans','Liberation Sans',sans-serif;color:#fff;transform:scaleX(1.0307);">s</span>
<div style="left:1630px;top:396px;width:19px;height:1px;background:#003595"></div>
<svg width="10" height="5" viewBox="0 0 10 5" style="left:1634.8px;top:387.2px"><path d="M0 5 H10 L5.0 0 Z" fill="#003595"/></svg>
<svg width="10" height="5" viewBox="0 0 10 5" style="left:1634.8px;top:401.3px"><path d="M0 0 H10 L5.0 5 Z" fill="#003595"/></svg>
<div class="btn" style="left:1332px;top:425px;width:38px;height:34px;"></div>
<svg width="14" height="15.6" viewBox="0 0 14 15.6" style="left:1343.9px;top:434.1px"><rect x="0" y="3" width="14" height="1.75" rx="0.5" fill="#00189b"/><path d="M4.6 3.2 V1.7 Q4.6 0.6 5.7 0.6 H8.3 Q9.4 0.6 9.4 1.7 V3.2" stroke="#00189b" stroke-width="1.2" fill="none"/><path d="M2.15 5.8 V12.7 Q2.15 14.8 4.25 14.8 H9.95 Q12.05 14.8 12.05 12.7 V5.8" stroke="#00189b" stroke-width="1.8" fill="none"/><path d="M7.07 5.8 V14.2" stroke="#00189b" stroke-width="2" fill="none"/></svg>
<div class="btn" style="left:1380px;top:425px;width:160px;height:34px;"></div>
<span id="t129" class="t" style="left:1391.30px;top:436.00px;font:400 16px/1 'DejaVu Sans','Liberation Sans',sans-serif;color:#3dacf7;transform:scaleX(1.0138);">NURTS</span>
<svg width="10" height="5.2" viewBox="0 0 10 5.2" style="left:1524.2px;top:440px"><path d="M0 0 H10 L5.0 5.2 Z" fill="#003595"/></svg>
<div class="inp" style="left:1550px;top:425px;width:100px;height:34px;"></div>
<div class="unit" style="left:1613px;top:426px;width:17px;height:32px;"></div>
<span id="t130" class="t" style="left:1583.40px;top:436.00px;font:400 16px/1 'DejaVu Sans','Liberation Sans',sans-serif;color:#3dacf7;transform:scaleX(0.9480);">30</span>
<span id="t131" class="t" style="left:1617.30px;top:436.00px;font:400 16px/1 'DejaVu Sans','Liberation Sans',sans-serif;color:#fff;transform:scaleX(1.0307);">s</span>
<div style="left:1630px;top:441px;width:19px;height:1px;background:#003595"></div>
<svg width="10" height="5" viewBox="0 0 10 5" style="left:1634.8px;top:432.2px"><path d="M0 5 H10 L5.0 0 Z" fill="#003595"/></svg>
<svg width="10" height="5" viewBox="0 0 10 5" style="left:1634.8px;top:446.3px"><path d="M0 0 H10 L5.0 5 Z" fill="#003595"/></svg>
<div class="btn" style="left:1332px;top:470px;width:38px;height:34px;"></div>
<svg width="14" height="15.6" viewBox="0 0 14 15.6" style="left:1343.9px;top:479.1px"><rect x="0" y="3" width="14" height="1.75" rx="0.5" fill="#00189b"/><path d="M4.6 3.2 V1.7 Q4.6 0.6 5.7 0.6 H8.3 Q9.4 0.6 9.4 1.7 V3.2" stroke="#00189b" stroke-width="1.2" fill="none"/><path d="M2.15 5.8 V12.7 Q2.15 14.8 4.25 14.8 H9.95 Q12.05 14.8 12.05 12.7 V5.8" stroke="#00189b" stroke-width="1.8" fill="none"/><path d="M7.07 5.8 V14.2" stroke="#00189b" stroke-width="2" fill="none"/></svg>
<div class="btn" style="left:1380px;top:470px;width:160px;height:34px;"></div>
<span id="t132" class="t" style="left:1391.30px;top:481.00px;font:400 16px/1 'DejaVu Sans','Liberation Sans',sans-serif;color:#3dacf7;transform:scaleX(1.0173);">UZBEK</span>
<svg width="10" height="5.2" viewBox="0 0 10 5.2" style="left:1524.2px;top:485px"><path d="M0 0 H10 L5.0 5.2 Z" fill="#003595"/></svg>
<div class="inp" style="left:1550px;top:470px;width:100px;height:34px;"></div>
<div class="unit" style="left:1613px;top:471px;width:17px;height:32px;"></div>
<span id="t133" class="t" style="left:1583.40px;top:481.00px;font:400 16px/1 'DejaVu Sans','Liberation Sans',sans-serif;color:#3dacf7;transform:scaleX(0.9480);">30</span>
<span id="t134" class="t" style="left:1617.30px;top:481.00px;font:400 16px/1 'DejaVu Sans','Liberation Sans',sans-serif;color:#fff;transform:scaleX(1.0307);">s</span>
<div style="left:1630px;top:486px;width:19px;height:1px;background:#003595"></div>
<svg width="10" height="5" viewBox="0 0 10 5" style="left:1634.8px;top:477.2px"><path d="M0 5 H10 L5.0 0 Z" fill="#003595"/></svg>
<svg width="10" height="5" viewBox="0 0 10 5" style="left:1634.8px;top:491.3px"><path d="M0 0 H10 L5.0 5 Z" fill="#003595"/></svg>
<div class="btn" style="left:1332px;top:515px;width:38px;height:34px;"></div>
<svg width="14" height="15.6" viewBox="0 0 14 15.6" style="left:1343.9px;top:524.1px"><rect x="0" y="3" width="14" height="1.75" rx="0.5" fill="#00189b"/><path d="M4.6 3.2 V1.7 Q4.6 0.6 5.7 0.6 H8.3 Q9.4 0.6 9.4 1.7 V3.2" stroke="#00189b" stroke-width="1.2" fill="none"/><path d="M2.15 5.8 V12.7 Q2.15 14.8 4.25 14.8 H9.95 Q12.05 14.8 12.05 12.7 V5.8" stroke="#00189b" stroke-width="1.8" fill="none"/><path d="M7.07 5.8 V14.2" stroke="#00189b" stroke-width="2" fill="none"/></svg>
<div class="btn" style="left:1380px;top:515px;width:160px;height:34px;"></div>
<span id="t135" class="t" style="left:1391.30px;top:526.00px;font:400 16px/1 'DejaVu Sans','Liberation Sans',sans-serif;color:#3dacf7;transform:scaleX(1.0094);">EUTELSAT</span>
<svg width="10" height="5.2" viewBox="0 0 10 5.2" style="left:1524.2px;top:530px"><path d="M0 0 H10 L5.0 5.2 Z" fill="#003595"/></svg>
<div class="inp" style="left:1550px;top:515px;width:100px;height:34px;"></div>
<div class="unit" style="left:1613px;top:516px;width:17px;height:32px;"></div>
<span id="t136" class="t" style="left:1583.40px;top:526.00px;font:400 16px/1 'DejaVu Sans','Liberation Sans',sans-serif;color:#3dacf7;transform:scaleX(0.9480);">30</span>
<span id="t137" class="t" style="left:1617.30px;top:526.00px;font:400 16px/1 'DejaVu Sans','Liberation Sans',sans-serif;color:#fff;transform:scaleX(1.0307);">s</span>
<div style="left:1630px;top:531px;width:19px;height:1px;background:#003595"></div>
<svg width="10" height="5" viewBox="0 0 10 5" style="left:1634.8px;top:522.2px"><path d="M0 5 H10 L5.0 0 Z" fill="#003595"/></svg>
<svg width="10" height="5" viewBox="0 0 10 5" style="left:1634.8px;top:536.3px"><path d="M0 0 H10 L5.0 5 Z" fill="#003595"/></svg>
<div class="btn" style="left:1332px;top:560px;width:38px;height:34px;"></div>
<svg width="14" height="15.6" viewBox="0 0 14 15.6" style="left:1343.9px;top:569.1px"><rect x="0" y="3" width="14" height="1.75" rx="0.5" fill="#00189b"/><path d="M4.6 3.2 V1.7 Q4.6 0.6 5.7 0.6 H8.3 Q9.4 0.6 9.4 1.7 V3.2" stroke="#00189b" stroke-width="1.2" fill="none"/><path d="M2.15 5.8 V12.7 Q2.15 14.8 4.25 14.8 H9.95 Q12.05 14.8 12.05 12.7 V5.8" stroke="#00189b" stroke-width="1.8" fill="none"/><path d="M7.07 5.8 V14.2" stroke="#00189b" stroke-width="2" fill="none"/></svg>
<div class="btn" style="left:1380px;top:560px;width:160px;height:34px;"></div>
<span id="t138" class="t" style="left:1391.30px;top:571.00px;font:400 16px/1 'DejaVu Sans','Liberation Sans',sans-serif;color:#3dacf7;transform:scaleX(0.9948);">Canal Plus</span>
<svg width="10" height="5.2" viewBox="0 0 10 5.2" style="left:1524.2px;top:575px"><path d="M0 0 H10 L5.0 5.2 Z" fill="#003595"/></svg>
<div class="inp" style="left:1550px;top:560px;width:100px;height:34px;"></div>
<div class="unit" style="left:1613px;top:561px;width:17px;height:32px;"></div>
<span id="t139" class="t" style="left:1583.40px;top:571.00px;font:400 16px/1 'DejaVu Sans','Liberation Sans',sans-serif;color:#3dacf7;transform:scaleX(0.9480);">30</span>
<span id="t140" class="t" style="left:1617.30px;top:571.00px;font:400 16px/1 'DejaVu Sans','Liberation Sans',sans-serif;color:#fff;transform:scaleX(1.0307);">s</span>
<div style="left:1630px;top:576px;width:19px;height:1px;background:#003595"></div>
<svg width="10" height="5" viewBox="0 0 10 5" style="left:1634.8px;top:567.2px"><path d="M0 5 H10 L5.0 0 Z" fill="#003595"/></svg>
<svg width="10" height="5" viewBox="0 0 10 5" style="left:1634.8px;top:581.3px"><path d="M0 0 H10 L5.0 5 Z" fill="#003595"/></svg>
<div class="btn" style="left:1332px;top:605px;width:38px;height:34px;"></div>
<svg width="14" height="15.6" viewBox="0 0 14 15.6" style="left:1343.9px;top:614.1px"><rect x="0" y="3" width="14" height="1.75" rx="0.5" fill="#00189b"/><path d="M4.6 3.2 V1.7 Q4.6 0.6 5.7 0.6 H8.3 Q9.4 0.6 9.4 1.7 V3.2" stroke="#00189b" stroke-width="1.2" fill="none"/><path d="M2.15 5.8 V12.7 Q2.15 14.8 4.25 14.8 H9.95 Q12.05 14.8 12.05 12.7 V5.8" stroke="#00189b" stroke-width="1.8" fill="none"/><path d="M7.07 5.8 V14.2" stroke="#00189b" stroke-width="2" fill="none"/></svg>
<div class="btn" style="left:1380px;top:605px;width:160px;height:34px;"></div>
<span id="t141" class="t" style="left:1391.30px;top:616.00px;font:400 16px/1 'DejaVu Sans','Liberation Sans',sans-serif;color:#3dacf7;transform:scaleX(1.0367);">CNBC-SKY</span>
<svg width="10" height="5.2" viewBox="0 0 10 5.2" style="left:1524.2px;top:620px"><path d="M0 0 H10 L5.0 5.2 Z" fill="#003595"/></svg>
<div class="inp" style="left:1550px;top:605px;width:100px;height:34px;"></div>
<div class="unit" style="left:1613px;top:606px;width:17px;height:32px;"></div>
<span id="t142" class="t" style="left:1583.40px;top:616.00px;font:400 16px/1 'DejaVu Sans','Liberation Sans',sans-serif;color:#3dacf7;transform:scaleX(0.9480);">30</span>
<span id="t143" class="t" style="left:1617.30px;top:616.00px;font:400 16px/1 'DejaVu Sans','Liberation Sans',sans-serif;color:#fff;transform:scaleX(1.0307);">s</span>
<div style="left:1630px;top:621px;width:19px;height:1px;background:#003595"></div>
<svg width="10" height="5" viewBox="0 0 10 5" style="left:1634.8px;top:612.2px"><path d="M0 5 H10 L5.0 0 Z" fill="#003595"/></svg>
<svg width="10" height="5" viewBox="0 0 10 5" style="left:1634.8px;top:626.3px"><path d="M0 0 H10 L5.0 5 Z" fill="#003595"/></svg>
<div style="left:40px;top:927px;width:1662px;height:15px;background:linear-gradient(to bottom,#fff 0%,#f3f6fb 35%,#cfd9ec 65%,#a5b7da 88%,#8aa2cf 100%)"></div>
<div style="left:40px;top:944px;width:1662px;height:49px;background:#003595"></div>
<div class="sep" style="left:260px;top:944px;width:1.2px;height:49px;"></div>
<div class="sep" style="left:384px;top:944px;width:1.2px;height:49px;"></div>
<div class="sep" style="left:636px;top:944px;width:1.2px;height:49px;"></div>
<div class="sep" style="left:764px;top:944px;width:1.2px;height:49px;"></div>
<div class="sep" style="left:992px;top:944px;width:1.2px;height:49px;"></div>
<div class="sep" style="left:1166px;top:944px;width:1.2px;height:49px;"></div>
<div class="sep" style="left:1290px;top:944px;width:1.2px;height:49px;"></div>
<div class="sep" style="left:1481px;top:944px;width:1.2px;height:49px;"></div>
<span id="t144" class="t" style="left:272.90px;top:949.00px;font:400 15.3px/1 'Liberation Sans',sans-serif;color:#3dacf7;transform:scaleX(1.0219);">Activity :</span>
<span id="t145" class="t" style="left:269.90px;top:973.00px;font:400 15.3px/1 'Liberation Sans',sans-serif;color:#3dacf7;transform:scaleX(0.9726);">Session :</span>
<span id="t146" class="t" style="left:335.80px;top:973.00px;font:400 15.3px/1 'Liberation Sans',sans-serif;color:#fff;transform:scaleX(1.0344);-webkit-text-stroke:0.5px #fff;">12:45</span>
<div style="left:336px;top:949px;width:15px;height:15px;border-radius:50%;background:radial-gradient(circle at 45% 40%,#3dff5a 0%,#05e52a 45%,#00c51f 100%)"></div>
<div style="left:395px;top:953px;width:36px;height:32px;background:#fff;border-radius:3px;box-shadow:inset -1px -2px 2px rgba(61,172,247,.6)"></div>
<svg width="17" height="11" viewBox="0 0 17 11" style="left:405px;top:963.8px"><circle cx="8.5" cy="5.5" r="1.4" fill="#00189b"/><path d="M5.6 2.8 A3.6 3.6 0 0 0 5.6 8.2 M11.4 2.8 A3.6 3.6 0 0 1 11.4 8.2 M3.3 0.8 A6.5 6.5 0 0 0 3.3 10.2 M13.7 0.8 A6.5 6.5 0 0 1 13.7 10.2" stroke="#00189b" stroke-width="1.3" fill="none" stroke-linecap="round"/></svg>
<span id="t147" class="t" style="left:439.80px;top:950.00px;font:400 15.3px/1 'Liberation Sans',sans-serif;color:#3dacf7;transform:scaleX(1.0659);">Multiplex :</span>
<span id="t148" class="t" style="left:517.40px;top:950.00px;font:400 15.3px/1 'Liberation Sans',sans-serif;color:#fff;transform:scaleX(1.0195);-webkit-text-stroke:0.5px #fff;">RN Digital</span>
<span id="t149" class="t" style="left:461.60px;top:971.00px;font:400 15.3px/1 'Liberation Sans',sans-serif;color:#3dacf7;transform:scaleX(0.9199);">DVB-C :</span>
<span id="t150" class="t" style="left:517.40px;top:971.00px;font:400 15.3px/1 'Liberation Sans',sans-serif;color:#fff;transform:scaleX(1.0057);-webkit-text-stroke:0.5px #fff;">290.000 MHz</span>
<div style="left:612px;top:971px;width:15px;height:15px;border-radius:50%;background:radial-gradient(circle at 45% 40%,#3dff5a 0%,#05e52a 45%,#00c51f 100%)"></div>
<div style="left:652px;top:953px;width:97px;height:32px;background:#fff;border-radius:3px;box-shadow:inset -1px -2px 2px rgba(61,172,247,.6)"></div>
<div style="left:662.3px;top:961.2px;width:15.4px;height:15.4px;border-radius:50%;background:#ff0000;border:1.3px solid #00189b"></div>
<span id="t151" class="t" style="left:684.80px;top:963.00px;font:400 16.8px/1 'Liberation Sans',sans-serif;color:#3dacf7;transform:scaleX(0.9961);">Record</span>
<span id="t152" class="t" style="left:778.90px;top:949.00px;font:400 15.3px/1 'Liberation Sans',sans-serif;color:#3dacf7;transform:scaleX(1.0509);">Overall bitrate :</span>
<span id="t153" class="t" style="left:892.60px;top:949.00px;font:400 15.3px/1 'Liberation Sans',sans-serif;color:#fff;transform:scaleX(1.0513);-webkit-text-stroke:0.5px #fff;">50.63 Mbit/s</span>
<span id="t154" class="t" style="left:804.90px;top:973.00px;font:400 15.3px/1 'Liberation Sans',sans-serif;color:#3dacf7;transform:scaleX(1.0496);">Net bitrate :</span>
<span id="t155" class="t" style="left:892.60px;top:973.00px;font:400 15.3px/1 'Liberation Sans',sans-serif;color:#fff;transform:scaleX(1.0657);-webkit-text-stroke:0.5px #fff;">42.11 Mbit/s</span>
<span id="t156" class="t" style="left:1020.50px;top:949.00px;font:400 15.3px/1 'Liberation Sans',sans-serif;color:#3dacf7;transform:scaleX(0.9616);">Device FW :</span>
<span id="t157" class="t" style="left:1105.00px;top:949.00px;font:400 15.3px/1 'Liberation Sans',sans-serif;color:#fff;-webkit-text-stroke:0.5px #fff;">1.0.1.1</span>
<span id="t158" class="t" style="left:1003.80px;top:973.00px;font:400 15.3px/1 'Liberation Sans',sans-serif;color:#3dacf7;transform:scaleX(1.0195);">Web Version :</span>
<span id="t159" class="t" style="left:1105.00px;top:973.00px;font:400 15.3px/1 'Liberation Sans',sans-serif;color:#fff;transform:scaleX(1.0285);-webkit-text-stroke:0.5px #fff;">1.14.99</span>
<span id="t160" class="t" style="left:1180.10px;top:949.00px;font:400 15.3px/1 'Liberation Sans',sans-serif;color:#3dacf7;transform:scaleX(1.0409);">Network ID :</span>
<span id="t161" class="t" style="left:1272.00px;top:949.00px;font:400 15.3px/1 'Liberation Sans',sans-serif;color:#fff;-webkit-text-stroke:0.5px #fff;">1</span>
<span id="t162" class="t" style="left:1224.40px;top:973.00px;font:400 15.3px/1 'Liberation Sans',sans-serif;color:#3dacf7;transform:scaleX(0.9098);">TS ID :</span>
<span id="t163" class="t" style="left:1272.00px;top:973.00px;font:400 15.3px/1 'Liberation Sans',sans-serif;color:#fff;-webkit-text-stroke:0.5px #fff;">6</span>
<span id="t164" class="t" style="left:1309.50px;top:949.00px;font:400 15.3px/1 'Liberation Sans',sans-serif;color:#3dacf7;transform:scaleX(1.0288);">Temp. :</span>
<span id="t165" class="t" style="left:1365.30px;top:949.00px;font:400 15.3px/1 'Liberation Sans',sans-serif;color:#fff;transform:scaleX(0.9954);-webkit-text-stroke:0.5px #fff;">55.00 ºC</span>
<span id="t166" class="t" style="left:1301.00px;top:973.00px;font:400 15.3px/1 'Liberation Sans',sans-serif;color:#3dacf7;transform:scaleX(1.0553);">Uptime :</span>
<span id="t167" class="t" style="left:1365.30px;top:973.00px;font:400 15.3px/1 'Liberation Sans',sans-serif;color:#fff;transform:scaleX(1.0226);-webkit-text-stroke:0.5px #fff;">1 day, 18:54:16</span>
</body></html>
